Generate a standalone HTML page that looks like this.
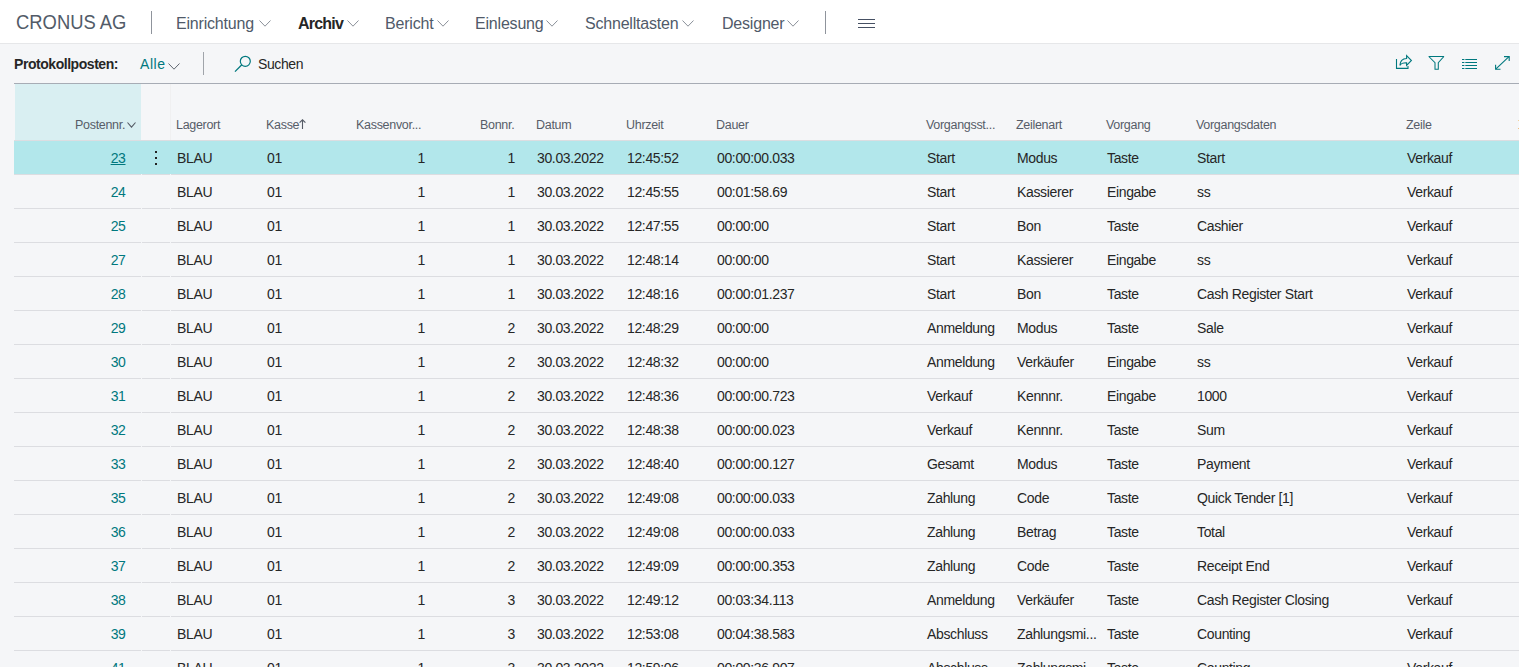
<!DOCTYPE html><html><head><meta charset="utf-8"><style>
*{box-sizing:border-box}
html,body{margin:0;padding:0}
body{width:1519px;height:667px;overflow:hidden;position:relative;background:#f5f6f8;font-family:"Liberation Sans",sans-serif;color:#262626}
.a{position:absolute;white-space:nowrap}
.top{position:absolute;left:0;top:0;width:1519px;height:43px;background:#fff}
.topb{position:absolute;left:0;top:43px;width:1519px;height:1px;background:#e6e7e9}
.nav{font-size:16px;color:#505a69;line-height:20px;top:14px;letter-spacing:-0.2px}
.chev{position:absolute}
.d{font-size:14px;line-height:16px;letter-spacing:-0.35px}
.h{font-size:12.5px;line-height:14px;color:#575d68;letter-spacing:-0.3px}
.link{color:#00787e}
.rb{position:absolute;height:1px;background:#dcdde1}
</style></head><body>
<div class="top"></div><div class="topb"></div>
<div class="a" style="left:16px;top:11px;font-size:20px;line-height:22px;color:#525b68;transform:scaleX(0.92);transform-origin:0 0">CRONUS AG</div>
<div class="a" style="left:151px;top:11px;width:1px;height:23px;background:#8f949c"></div>
<div class="a nav" style="left:176px;">Einrichtung</div>
<svg class="chev" style="left:259px;top:20px" width="12" height="7" viewBox="0 0 12 7"><path d="M0.5 0.5 L6.0 6.2 L11.5 0.5" fill="none" stroke="#8a9099" stroke-width="1"/></svg>
<div class="a nav" style="left:298px;font-weight:bold;color:#262626;letter-spacing:-0.8px">Archiv</div>
<svg class="chev" style="left:347px;top:20px" width="12" height="7" viewBox="0 0 12 7"><path d="M0.5 0.5 L6.0 6.2 L11.5 0.5" fill="none" stroke="#8a9099" stroke-width="1"/></svg>
<div class="a nav" style="left:385px;">Bericht</div>
<svg class="chev" style="left:437px;top:20px" width="12" height="7" viewBox="0 0 12 7"><path d="M0.5 0.5 L6.0 6.2 L11.5 0.5" fill="none" stroke="#8a9099" stroke-width="1"/></svg>
<div class="a nav" style="left:475px;">Einlesung</div>
<svg class="chev" style="left:546px;top:20px" width="12" height="7" viewBox="0 0 12 7"><path d="M0.5 0.5 L6.0 6.2 L11.5 0.5" fill="none" stroke="#8a9099" stroke-width="1"/></svg>
<div class="a nav" style="left:585px;">Schnelltasten</div>
<svg class="chev" style="left:682px;top:20px" width="12" height="7" viewBox="0 0 12 7"><path d="M0.5 0.5 L6.0 6.2 L11.5 0.5" fill="none" stroke="#8a9099" stroke-width="1"/></svg>
<div class="a nav" style="left:722px;">Designer</div>
<svg class="chev" style="left:787px;top:20px" width="12" height="7" viewBox="0 0 12 7"><path d="M0.5 0.5 L6.0 6.2 L11.5 0.5" fill="none" stroke="#8a9099" stroke-width="1"/></svg>
<div class="a" style="left:825px;top:11px;width:1px;height:23px;background:#8f949c"></div>
<div class="a" style="left:858px;top:19px;width:17px;height:1px;background:#465063"></div>
<div class="a" style="left:858px;top:23px;width:17px;height:1px;background:#465063"></div>
<div class="a" style="left:858px;top:27px;width:17px;height:1px;background:#465063"></div>
<div class="a" style="left:14px;top:56px;font-size:14px;line-height:16px;font-weight:bold;color:#262626;letter-spacing:-0.45px">Protokollposten:</div>
<div class="a" style="left:140px;top:56px;font-size:14px;line-height:16px;color:#00787e;letter-spacing:0.55px">Alle</div>
<svg class="chev" style="left:168px;top:63px" width="12" height="7" viewBox="0 0 12 7"><path d="M0.5 0.5 L6.0 6.2 L11.5 0.5" fill="none" stroke="#5f6670" stroke-width="1"/></svg>
<div class="a" style="left:203px;top:52px;width:1px;height:23px;background:#a0a4aa"></div>
<svg class="a" style="left:233px;top:55px" width="20" height="18" viewBox="0 0 20 18"><circle cx="12.3" cy="6.3" r="5" fill="none" stroke="#00787e" stroke-width="1.2"/><path d="M8.8 9.8 L2 16.6" stroke="#00787e" stroke-width="1.3"/></svg>
<div class="a" style="left:258px;top:56px;font-size:14px;line-height:16px;color:#262626;letter-spacing:-0.4px">Suchen</div>
<svg class="a" style="left:1392px;top:52px" width="24" height="20" viewBox="0 0 24 20"><g fill="none" stroke="#00787e" stroke-width="1.1"><path d="M4.5 7 V16.4 H16 V14"/><path d="M14.6 3.6 L19.4 8.5 L14.6 13.3 V10.7 C11.6 10.6 9.4 10.9 7.9 13.4 C8.1 9.2 10.6 6.6 14.6 6.5 Z" stroke-linejoin="miter"/></g></svg>
<svg class="a" style="left:1424px;top:52px" width="24" height="20" viewBox="0 0 24 20"><path d="M4.8 4.5 H19.9 L14.3 10.6 V17.3 H11 V10.6 Z" fill="none" stroke="#00787e" stroke-width="1.05" stroke-miterlimit="2"/></svg>
<svg class="a" style="left:1458px;top:52px" width="24" height="20" viewBox="0 0 24 20"><g stroke="#00787e" stroke-width="1.05"><path d="M4 7.5 H6.4 M4 10.5 H6.4 M4 13.5 H6.4 M4 16.5 H6.4"/><path d="M7.3 7.5 H19 M7.3 10.5 H19 M7.3 13.5 H19 M7.3 16.5 H19"/></g></svg>
<svg class="a" style="left:1490px;top:52px" width="24" height="20" viewBox="0 0 24 20"><g fill="none" stroke="#00787e" stroke-width="1.1"><path d="M6 16.8 L19 4.6"/><path d="M14 4.6 H19.2 V9"/><path d="M5.6 12.8 V17.2 H10.5"/></g></svg>
<div class="a" style="left:14px;top:83px;width:1505px;height:1px;background:#a7acb5"></div>
<div class="a" style="left:15px;top:84px;width:126px;height:56px;background:#d9eff2"></div>
<div class="a" style="left:14px;top:140px;width:1505px;height:1px;background:#dcdde1"></div>
<div class="a" style="left:170px;top:84px;width:1px;height:56px;background:#f0f0f1"></div>
<div class="a h" style="left:75px;top:118px">Postennr.</div>
<div class="a h" style="left:176px;top:118px">Lagerort</div>
<div class="a h" style="left:266px;top:118px">Kasse</div>
<div class="a h" style="left:356px;top:118px">Kassenvor...</div>
<div class="a h" style="left:480px;top:118px">Bonnr.</div>
<div class="a h" style="left:536px;top:118px">Datum</div>
<div class="a h" style="left:626px;top:118px">Uhrzeit</div>
<div class="a h" style="left:716px;top:118px">Dauer</div>
<div class="a h" style="left:926px;top:118px">Vorgangsst...</div>
<div class="a h" style="left:1016px;top:118px">Zeilenart</div>
<div class="a h" style="left:1106px;top:118px">Vorgang</div>
<div class="a h" style="left:1196px;top:118px">Vorgangsdaten</div>
<div class="a h" style="left:1406px;top:118px">Zeile</div>
<svg class="chev" style="left:127px;top:122px" width="9" height="6" viewBox="0 0 9 6"><path d="M0.5 0.5 L4.5 5.2 L8.5 0.5" fill="none" stroke="#555b66" stroke-width="1.1"/></svg>
<svg class="a" style="left:299px;top:119px" width="7" height="10" viewBox="0 0 7 10"><path d="M3.5 0.8 V10 M0.6 3.6 L3.5 0.8 L6.4 3.6" fill="none" stroke="#555b66" stroke-width="1.1"/></svg>
<div class="a" style="left:14px;top:141px;width:1505px;height:33px;background:#b2e7eb"></div>
<div class="a" style="left:155px;top:151px;width:2px;height:2px;background:#222"></div>
<div class="a" style="left:155px;top:157px;width:2px;height:2px;background:#222"></div>
<div class="a" style="left:155px;top:163px;width:2px;height:2px;background:#222"></div>
<div class="rb" style="left:14px;top:174px;width:127px"></div>
<div class="rb" style="left:142px;top:174px;width:28px"></div>
<div class="rb" style="left:171px;top:174px;width:1348px"></div>
<div class="a d link" style="right:1393.5px;top:150px;text-decoration:underline;">23</div>
<div class="a d" style="left:177px;top:150px;">BLAU</div>
<div class="a d" style="left:267px;top:150px;">01</div>
<div class="a d" style="right:1094px;top:150px;">1</div>
<div class="a d" style="right:1004px;top:150px;">1</div>
<div class="a d" style="left:537px;top:150px;">30.03.2022</div>
<div class="a d" style="left:627px;top:150px;">12:45:52</div>
<div class="a d" style="left:717px;top:150px;">00:00:00.033</div>
<div class="a d" style="left:927px;top:150px;">Start</div>
<div class="a d" style="left:1017px;top:150px;">Modus</div>
<div class="a d" style="left:1107px;top:150px;">Taste</div>
<div class="a d" style="left:1197px;top:150px;">Start</div>
<div class="a d" style="left:1407px;top:150px;">Verkauf</div>
<div class="rb" style="left:14px;top:208px;width:127px"></div>
<div class="rb" style="left:142px;top:208px;width:28px"></div>
<div class="rb" style="left:171px;top:208px;width:1348px"></div>
<div class="a d link" style="right:1393.5px;top:184px;">24</div>
<div class="a d" style="left:177px;top:184px;">BLAU</div>
<div class="a d" style="left:267px;top:184px;">01</div>
<div class="a d" style="right:1094px;top:184px;">1</div>
<div class="a d" style="right:1004px;top:184px;">1</div>
<div class="a d" style="left:537px;top:184px;">30.03.2022</div>
<div class="a d" style="left:627px;top:184px;">12:45:55</div>
<div class="a d" style="left:717px;top:184px;">00:01:58.69</div>
<div class="a d" style="left:927px;top:184px;">Start</div>
<div class="a d" style="left:1017px;top:184px;">Kassierer</div>
<div class="a d" style="left:1107px;top:184px;">Eingabe</div>
<div class="a d" style="left:1197px;top:184px;">ss</div>
<div class="a d" style="left:1407px;top:184px;">Verkauf</div>
<div class="rb" style="left:14px;top:242px;width:127px"></div>
<div class="rb" style="left:142px;top:242px;width:28px"></div>
<div class="rb" style="left:171px;top:242px;width:1348px"></div>
<div class="a d link" style="right:1393.5px;top:218px;">25</div>
<div class="a d" style="left:177px;top:218px;">BLAU</div>
<div class="a d" style="left:267px;top:218px;">01</div>
<div class="a d" style="right:1094px;top:218px;">1</div>
<div class="a d" style="right:1004px;top:218px;">1</div>
<div class="a d" style="left:537px;top:218px;">30.03.2022</div>
<div class="a d" style="left:627px;top:218px;">12:47:55</div>
<div class="a d" style="left:717px;top:218px;">00:00:00</div>
<div class="a d" style="left:927px;top:218px;">Start</div>
<div class="a d" style="left:1017px;top:218px;">Bon</div>
<div class="a d" style="left:1107px;top:218px;">Taste</div>
<div class="a d" style="left:1197px;top:218px;">Cashier</div>
<div class="a d" style="left:1407px;top:218px;">Verkauf</div>
<div class="rb" style="left:14px;top:276px;width:127px"></div>
<div class="rb" style="left:142px;top:276px;width:28px"></div>
<div class="rb" style="left:171px;top:276px;width:1348px"></div>
<div class="a d link" style="right:1393.5px;top:252px;">27</div>
<div class="a d" style="left:177px;top:252px;">BLAU</div>
<div class="a d" style="left:267px;top:252px;">01</div>
<div class="a d" style="right:1094px;top:252px;">1</div>
<div class="a d" style="right:1004px;top:252px;">1</div>
<div class="a d" style="left:537px;top:252px;">30.03.2022</div>
<div class="a d" style="left:627px;top:252px;">12:48:14</div>
<div class="a d" style="left:717px;top:252px;">00:00:00</div>
<div class="a d" style="left:927px;top:252px;">Start</div>
<div class="a d" style="left:1017px;top:252px;">Kassierer</div>
<div class="a d" style="left:1107px;top:252px;">Eingabe</div>
<div class="a d" style="left:1197px;top:252px;">ss</div>
<div class="a d" style="left:1407px;top:252px;">Verkauf</div>
<div class="rb" style="left:14px;top:310px;width:127px"></div>
<div class="rb" style="left:142px;top:310px;width:28px"></div>
<div class="rb" style="left:171px;top:310px;width:1348px"></div>
<div class="a d link" style="right:1393.5px;top:286px;">28</div>
<div class="a d" style="left:177px;top:286px;">BLAU</div>
<div class="a d" style="left:267px;top:286px;">01</div>
<div class="a d" style="right:1094px;top:286px;">1</div>
<div class="a d" style="right:1004px;top:286px;">1</div>
<div class="a d" style="left:537px;top:286px;">30.03.2022</div>
<div class="a d" style="left:627px;top:286px;">12:48:16</div>
<div class="a d" style="left:717px;top:286px;">00:00:01.237</div>
<div class="a d" style="left:927px;top:286px;">Start</div>
<div class="a d" style="left:1017px;top:286px;">Bon</div>
<div class="a d" style="left:1107px;top:286px;">Taste</div>
<div class="a d" style="left:1197px;top:286px;">Cash Register Start</div>
<div class="a d" style="left:1407px;top:286px;">Verkauf</div>
<div class="rb" style="left:14px;top:344px;width:127px"></div>
<div class="rb" style="left:142px;top:344px;width:28px"></div>
<div class="rb" style="left:171px;top:344px;width:1348px"></div>
<div class="a d link" style="right:1393.5px;top:320px;">29</div>
<div class="a d" style="left:177px;top:320px;">BLAU</div>
<div class="a d" style="left:267px;top:320px;">01</div>
<div class="a d" style="right:1094px;top:320px;">1</div>
<div class="a d" style="right:1004px;top:320px;">2</div>
<div class="a d" style="left:537px;top:320px;">30.03.2022</div>
<div class="a d" style="left:627px;top:320px;">12:48:29</div>
<div class="a d" style="left:717px;top:320px;">00:00:00</div>
<div class="a d" style="left:927px;top:320px;">Anmeldung</div>
<div class="a d" style="left:1017px;top:320px;">Modus</div>
<div class="a d" style="left:1107px;top:320px;">Taste</div>
<div class="a d" style="left:1197px;top:320px;">Sale</div>
<div class="a d" style="left:1407px;top:320px;">Verkauf</div>
<div class="rb" style="left:14px;top:378px;width:127px"></div>
<div class="rb" style="left:142px;top:378px;width:28px"></div>
<div class="rb" style="left:171px;top:378px;width:1348px"></div>
<div class="a d link" style="right:1393.5px;top:354px;">30</div>
<div class="a d" style="left:177px;top:354px;">BLAU</div>
<div class="a d" style="left:267px;top:354px;">01</div>
<div class="a d" style="right:1094px;top:354px;">1</div>
<div class="a d" style="right:1004px;top:354px;">2</div>
<div class="a d" style="left:537px;top:354px;">30.03.2022</div>
<div class="a d" style="left:627px;top:354px;">12:48:32</div>
<div class="a d" style="left:717px;top:354px;">00:00:00</div>
<div class="a d" style="left:927px;top:354px;">Anmeldung</div>
<div class="a d" style="left:1017px;top:354px;">Verkäufer</div>
<div class="a d" style="left:1107px;top:354px;">Eingabe</div>
<div class="a d" style="left:1197px;top:354px;">ss</div>
<div class="a d" style="left:1407px;top:354px;">Verkauf</div>
<div class="rb" style="left:14px;top:412px;width:127px"></div>
<div class="rb" style="left:142px;top:412px;width:28px"></div>
<div class="rb" style="left:171px;top:412px;width:1348px"></div>
<div class="a d link" style="right:1393.5px;top:388px;">31</div>
<div class="a d" style="left:177px;top:388px;">BLAU</div>
<div class="a d" style="left:267px;top:388px;">01</div>
<div class="a d" style="right:1094px;top:388px;">1</div>
<div class="a d" style="right:1004px;top:388px;">2</div>
<div class="a d" style="left:537px;top:388px;">30.03.2022</div>
<div class="a d" style="left:627px;top:388px;">12:48:36</div>
<div class="a d" style="left:717px;top:388px;">00:00:00.723</div>
<div class="a d" style="left:927px;top:388px;">Verkauf</div>
<div class="a d" style="left:1017px;top:388px;">Kennnr.</div>
<div class="a d" style="left:1107px;top:388px;">Eingabe</div>
<div class="a d" style="left:1197px;top:388px;">1000</div>
<div class="a d" style="left:1407px;top:388px;">Verkauf</div>
<div class="rb" style="left:14px;top:446px;width:127px"></div>
<div class="rb" style="left:142px;top:446px;width:28px"></div>
<div class="rb" style="left:171px;top:446px;width:1348px"></div>
<div class="a d link" style="right:1393.5px;top:422px;">32</div>
<div class="a d" style="left:177px;top:422px;">BLAU</div>
<div class="a d" style="left:267px;top:422px;">01</div>
<div class="a d" style="right:1094px;top:422px;">1</div>
<div class="a d" style="right:1004px;top:422px;">2</div>
<div class="a d" style="left:537px;top:422px;">30.03.2022</div>
<div class="a d" style="left:627px;top:422px;">12:48:38</div>
<div class="a d" style="left:717px;top:422px;">00:00:00.023</div>
<div class="a d" style="left:927px;top:422px;">Verkauf</div>
<div class="a d" style="left:1017px;top:422px;">Kennnr.</div>
<div class="a d" style="left:1107px;top:422px;">Taste</div>
<div class="a d" style="left:1197px;top:422px;">Sum</div>
<div class="a d" style="left:1407px;top:422px;">Verkauf</div>
<div class="rb" style="left:14px;top:480px;width:127px"></div>
<div class="rb" style="left:142px;top:480px;width:28px"></div>
<div class="rb" style="left:171px;top:480px;width:1348px"></div>
<div class="a d link" style="right:1393.5px;top:456px;">33</div>
<div class="a d" style="left:177px;top:456px;">BLAU</div>
<div class="a d" style="left:267px;top:456px;">01</div>
<div class="a d" style="right:1094px;top:456px;">1</div>
<div class="a d" style="right:1004px;top:456px;">2</div>
<div class="a d" style="left:537px;top:456px;">30.03.2022</div>
<div class="a d" style="left:627px;top:456px;">12:48:40</div>
<div class="a d" style="left:717px;top:456px;">00:00:00.127</div>
<div class="a d" style="left:927px;top:456px;">Gesamt</div>
<div class="a d" style="left:1017px;top:456px;">Modus</div>
<div class="a d" style="left:1107px;top:456px;">Taste</div>
<div class="a d" style="left:1197px;top:456px;">Payment</div>
<div class="a d" style="left:1407px;top:456px;">Verkauf</div>
<div class="rb" style="left:14px;top:514px;width:127px"></div>
<div class="rb" style="left:142px;top:514px;width:28px"></div>
<div class="rb" style="left:171px;top:514px;width:1348px"></div>
<div class="a d link" style="right:1393.5px;top:490px;">35</div>
<div class="a d" style="left:177px;top:490px;">BLAU</div>
<div class="a d" style="left:267px;top:490px;">01</div>
<div class="a d" style="right:1094px;top:490px;">1</div>
<div class="a d" style="right:1004px;top:490px;">2</div>
<div class="a d" style="left:537px;top:490px;">30.03.2022</div>
<div class="a d" style="left:627px;top:490px;">12:49:08</div>
<div class="a d" style="left:717px;top:490px;">00:00:00.033</div>
<div class="a d" style="left:927px;top:490px;">Zahlung</div>
<div class="a d" style="left:1017px;top:490px;">Code</div>
<div class="a d" style="left:1107px;top:490px;">Taste</div>
<div class="a d" style="left:1197px;top:490px;">Quick Tender [1]</div>
<div class="a d" style="left:1407px;top:490px;">Verkauf</div>
<div class="rb" style="left:14px;top:548px;width:127px"></div>
<div class="rb" style="left:142px;top:548px;width:28px"></div>
<div class="rb" style="left:171px;top:548px;width:1348px"></div>
<div class="a d link" style="right:1393.5px;top:524px;">36</div>
<div class="a d" style="left:177px;top:524px;">BLAU</div>
<div class="a d" style="left:267px;top:524px;">01</div>
<div class="a d" style="right:1094px;top:524px;">1</div>
<div class="a d" style="right:1004px;top:524px;">2</div>
<div class="a d" style="left:537px;top:524px;">30.03.2022</div>
<div class="a d" style="left:627px;top:524px;">12:49:08</div>
<div class="a d" style="left:717px;top:524px;">00:00:00.033</div>
<div class="a d" style="left:927px;top:524px;">Zahlung</div>
<div class="a d" style="left:1017px;top:524px;">Betrag</div>
<div class="a d" style="left:1107px;top:524px;">Taste</div>
<div class="a d" style="left:1197px;top:524px;">Total</div>
<div class="a d" style="left:1407px;top:524px;">Verkauf</div>
<div class="rb" style="left:14px;top:582px;width:127px"></div>
<div class="rb" style="left:142px;top:582px;width:28px"></div>
<div class="rb" style="left:171px;top:582px;width:1348px"></div>
<div class="a d link" style="right:1393.5px;top:558px;">37</div>
<div class="a d" style="left:177px;top:558px;">BLAU</div>
<div class="a d" style="left:267px;top:558px;">01</div>
<div class="a d" style="right:1094px;top:558px;">1</div>
<div class="a d" style="right:1004px;top:558px;">2</div>
<div class="a d" style="left:537px;top:558px;">30.03.2022</div>
<div class="a d" style="left:627px;top:558px;">12:49:09</div>
<div class="a d" style="left:717px;top:558px;">00:00:00.353</div>
<div class="a d" style="left:927px;top:558px;">Zahlung</div>
<div class="a d" style="left:1017px;top:558px;">Code</div>
<div class="a d" style="left:1107px;top:558px;">Taste</div>
<div class="a d" style="left:1197px;top:558px;">Receipt End</div>
<div class="a d" style="left:1407px;top:558px;">Verkauf</div>
<div class="rb" style="left:14px;top:616px;width:127px"></div>
<div class="rb" style="left:142px;top:616px;width:28px"></div>
<div class="rb" style="left:171px;top:616px;width:1348px"></div>
<div class="a d link" style="right:1393.5px;top:592px;">38</div>
<div class="a d" style="left:177px;top:592px;">BLAU</div>
<div class="a d" style="left:267px;top:592px;">01</div>
<div class="a d" style="right:1094px;top:592px;">1</div>
<div class="a d" style="right:1004px;top:592px;">3</div>
<div class="a d" style="left:537px;top:592px;">30.03.2022</div>
<div class="a d" style="left:627px;top:592px;">12:49:12</div>
<div class="a d" style="left:717px;top:592px;">00:03:34.113</div>
<div class="a d" style="left:927px;top:592px;">Anmeldung</div>
<div class="a d" style="left:1017px;top:592px;">Verkäufer</div>
<div class="a d" style="left:1107px;top:592px;">Taste</div>
<div class="a d" style="left:1197px;top:592px;">Cash Register Closing</div>
<div class="a d" style="left:1407px;top:592px;">Verkauf</div>
<div class="rb" style="left:14px;top:650px;width:127px"></div>
<div class="rb" style="left:142px;top:650px;width:28px"></div>
<div class="rb" style="left:171px;top:650px;width:1348px"></div>
<div class="a d link" style="right:1393.5px;top:626px;">39</div>
<div class="a d" style="left:177px;top:626px;">BLAU</div>
<div class="a d" style="left:267px;top:626px;">01</div>
<div class="a d" style="right:1094px;top:626px;">1</div>
<div class="a d" style="right:1004px;top:626px;">3</div>
<div class="a d" style="left:537px;top:626px;">30.03.2022</div>
<div class="a d" style="left:627px;top:626px;">12:53:08</div>
<div class="a d" style="left:717px;top:626px;">00:04:38.583</div>
<div class="a d" style="left:927px;top:626px;">Abschluss</div>
<div class="a d" style="left:1017px;top:626px;">Zahlungsmi...</div>
<div class="a d" style="left:1107px;top:626px;">Taste</div>
<div class="a d" style="left:1197px;top:626px;">Counting</div>
<div class="a d" style="left:1407px;top:626px;">Verkauf</div>
<div class="rb" style="left:14px;top:684px;width:127px"></div>
<div class="rb" style="left:142px;top:684px;width:28px"></div>
<div class="rb" style="left:171px;top:684px;width:1348px"></div>
<div class="a d link" style="right:1393.5px;top:660px;">41</div>
<div class="a d" style="left:177px;top:660px;">BLAU</div>
<div class="a d" style="left:267px;top:660px;">01</div>
<div class="a d" style="right:1094px;top:660px;">1</div>
<div class="a d" style="right:1004px;top:660px;">3</div>
<div class="a d" style="left:537px;top:660px;">30.03.2022</div>
<div class="a d" style="left:627px;top:660px;">12:59:06</div>
<div class="a d" style="left:717px;top:660px;">00:00:36.907</div>
<div class="a d" style="left:927px;top:660px;">Abschluss</div>
<div class="a d" style="left:1017px;top:660px;">Zahlungsmi...</div>
<div class="a d" style="left:1107px;top:660px;">Taste</div>
<div class="a d" style="left:1197px;top:660px;">Counting</div>
<div class="a d" style="left:1407px;top:660px;">Verkauf</div>
<div class="a" style="left:1518px;top:120px;width:1px;height:1px;background:#f3d29c"></div><div class="a" style="left:1518px;top:128px;width:1px;height:1px;background:#f2bf7e"></div>
</body></html>
